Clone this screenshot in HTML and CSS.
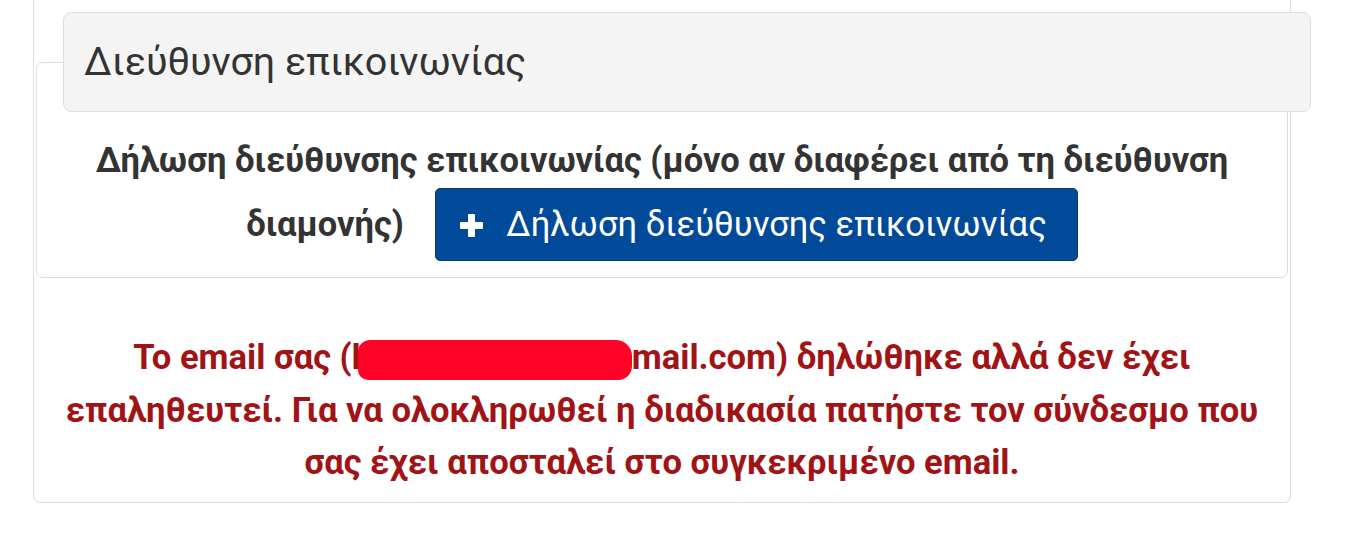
FILE: index.html
```html
<!DOCTYPE html>
<html lang="el">
<head>
<meta charset="utf-8">
<title>Διεύθυνση επικοινωνίας</title>
<link rel="stylesheet" href="styles.css">
</head>
<body>
<div class="page">
  <div class="outer">
    <fieldset class="box">
      <legend class="box-title">Διεύθυνση επικοινωνίας</legend>
      <div class="declare">Δήλωση διεύθυνσης επικοινωνίας (μόνο αν διαφέρει από τη διεύθυνση διαμονής) <button class="btn" type="button"><svg class="plus" width="23" height="23" viewBox="0 0 23 23" aria-hidden="true"><rect x="8" y="0" width="7" height="23" rx="1" fill="#fff"/><rect x="0" y="8" width="23" height="7" rx="1" fill="#fff"/></svg><span class="btn-label">Δήλωση διεύθυνσης επικοινωνίας</span></button></div>
    </fieldset>
    <p class="warning">Το email σας (l<span class="redact"></span>mail.com) δηλώθηκε αλλά δεν έχει επαληθευτεί. Για να ολοκληρωθεί η διαδικασία πατήστε τον σύνδεσμο που σας έχει αποσταλεί στο συγκεκριμένο email.</p>
  </div>
</div>
</body>
</html>
```

FILE: styles.css
```css
html, body {
  margin: 0;
  padding: 0;
  background: #ffffff;
}

body {
  font-family: Roboto, "Noto Sans", "Liberation Sans", sans-serif;
  color: #333333;
}

.page {
  padding: 0 69px 0 33px;
}

.outer {
  border: 1px solid #dddddd;
  border-top: 0;
  border-radius: 0 0 7px 7px;
  padding: 12px 0 0;
}

.box {
  margin: 0 2px;
  border: 1px solid #dddddd;
  border-radius: 7px;
  padding: 0 26px 16px;
  min-width: 0;
}

.box-title {
  box-sizing: border-box;
  width: 1248px;
  height: 100px;
  margin: 0;
  padding: 0 20px;
  background: #f4f4f4;
  border: 1px solid #dedede;
  border-radius: 8px;
  font-size: 39.5px;
  line-height: 98px;
  font-weight: 400;
  color: #333333;
}

.declare {
  padding-top: 21px;
  text-align: center;
  font-size: 34.5px;
  font-weight: 700;
  line-height: 55px;
  color: #333333;
}

.btn {
  display: inline-block;
  box-sizing: border-box;
  height: 73px;
  margin: 0 0 0 23px;
  padding: 0 30px 0 24px;
  background: #014a9a;
  border: 1px solid #0d3a6e;
  border-radius: 5px;
  color: #ffffff;
  font-family: Roboto, "Noto Sans", "Liberation Sans", sans-serif;
  font-size: 34.6px;
  font-weight: 400;
  line-height: 71px;
  vertical-align: baseline;
  cursor: pointer;
}

.plus {
  vertical-align: -1px;
  margin-right: 23px;
}

.warning {
  margin: 53px 20px 13px;
  text-align: center;
  font-size: 34.6px;
  font-weight: 700;
  line-height: 52.5px;
  color: #a11315;
}

.redact {
  display: inline-block;
  width: 274px;
  height: 40px;
  margin-left: -3px;
  vertical-align: -11px;
  background: #ff0328;
  border-radius: 12px 16px 14px 10px;
}
```
